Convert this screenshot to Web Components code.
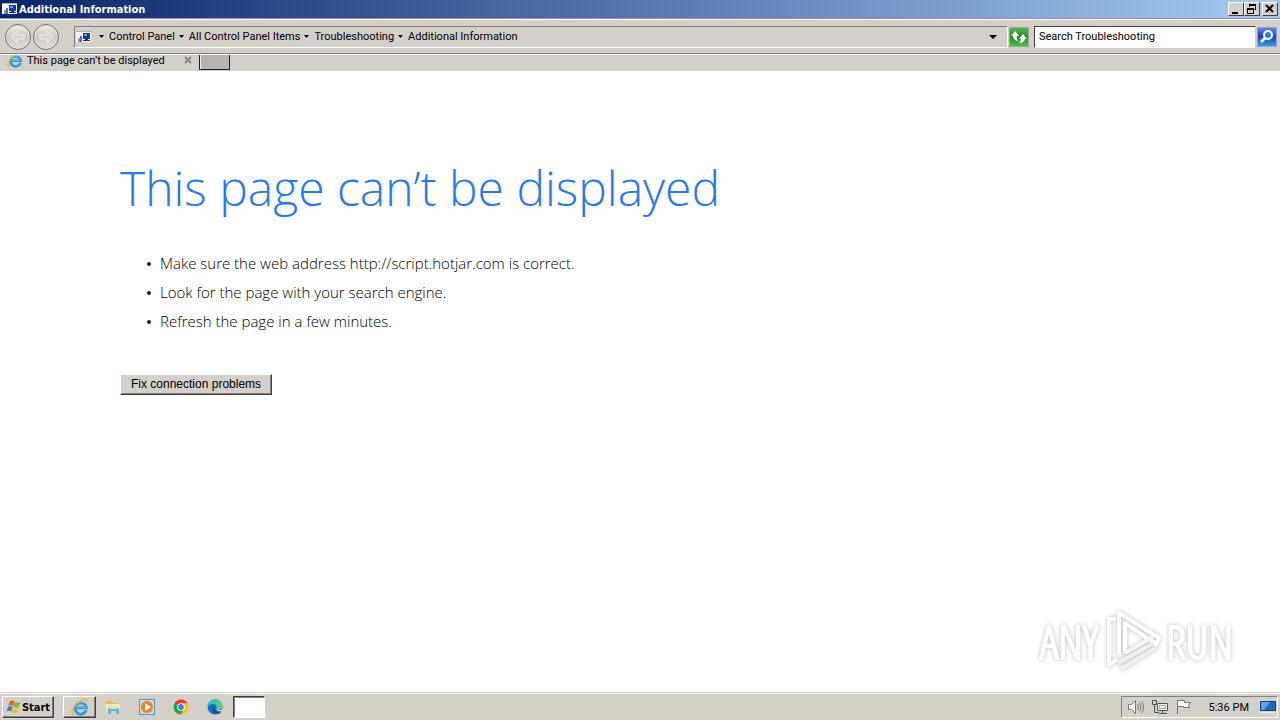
<!DOCTYPE html>
<html lang="en">
<head>
<meta charset="UTF-8">
<meta name="viewport" content="width=device-width, initial-scale=1">
<title>Additional Information</title>
<style>
  html, body {
    height: 100%;
    margin: 0;
  }
  body {
    display: flex;
    flex-direction: column;
    background: #fff;
    color: #000;
    overflow: hidden;
    font-family: Roboto, "DejaVu Sans", sans-serif;
    font-size: 11px;
    --face: #d4cfc8;
    --light: #fff;
    --shadow: #808080;
    --dark: #404040;
  }
</style>
</head>
<body>
<window-title>Additional Information</window-title>
<explorer-bar search="Search Troubleshooting">
  <path-crumb>Control Panel</path-crumb>
  <path-crumb>All Control Panel Items</path-crumb>
  <path-crumb>Troubleshooting</path-crumb>
  <path-crumb>Additional Information</path-crumb>
</explorer-bar>
<tab-strip>This page can’t be displayed</tab-strip>
<error-page heading="This page can’t be displayed" action="Fix connection problems">
  <error-hint>Make sure the web address http://script.hotjar.com is correct.</error-hint>
  <error-hint>Look for the page with your search engine.</error-hint>
  <error-hint>Refresh the page in a few minutes.</error-hint>
  <anyrun-mark slot="mark"></anyrun-mark>
</error-page>
<task-bar time="5:36 PM"></task-bar>

<script>
const ieIcon = size => `
  <svg width="${size}" height="${size}" viewBox="0 0 16 16" aria-hidden="true">
    <path d="M13.4 10.8A5 5 0 1 1 13.6 8.7H4.6" fill="none" stroke="#2a9be0" stroke-width="2.6"/>
    <path d="M4.5 8.2h8.5" stroke="#61c8f5" stroke-width="1"/>
    <path d="M5 5.5a5 5 0 0 1 6-1.5" fill="none" stroke="#7fd3f8" stroke-width="1"/>
    <path d="M2.8 14.6C-.8 14.4 1 8.5 5.6 4.6S14.8-.5 14.8 3.8" fill="none" stroke="#e9b92c" stroke-width="1.4"/>
  </svg>`;

const panelIcon = `
  <svg width="16" height="14" viewBox="0 0 16 14" aria-hidden="true">
    <path fill="#f4f4f4" d="M0 1h15v11H0z"/>
    <path fill="#9fb0c8" d="M0 1h15v1H0z"/>
    <path fill="#1838a8" d="M7 3h7v6H7z"/>
    <path fill="#6d9cf0" d="M8 4h3v2H8z"/>
    <path fill="#1b2c70" d="M9 9h3v1h2v1H7v-1h2z"/>
    <path fill="#8a9a8c" d="M2 8h2v4H2z"/>
    <path fill="#4472c4" d="M4 6h2v6H4z"/>
  </svg>`;

class WindowTitle extends HTMLElement {
  constructor() {
    super();
    this.attachShadow({ mode: 'open' });
  }

  connectedCallback() {
    this.shadowRoot.innerHTML = `
      <style>
        :host {
          display: flex;
          align-items: center;
          flex: none;
          height: 18px;
          padding: 0 2px;
          background: linear-gradient(90deg, #0a246a, #a6caf0);
          border-bottom: 1px solid #8c8cb4;
          color: #fff;
          font-family: "DejaVu Sans Condensed", "DejaVu Sans", sans-serif;
          font-weight: bold;
        }
        .name { flex: 1; padding-left: 1px; }
        button {
          width: 16px;
          height: 14px;
          padding: 0;
          border: 1px solid;
          border-color: var(--light) var(--dark) var(--dark) var(--light);
          background: var(--face);
        }
        .close { margin-left: 2px; }
        svg { display: block; }
      </style>
      ${panelIcon}
      <span class="name"><slot></slot></span>
      <button aria-label="Minimize"><svg width="14" height="12"><path d="M3 9h6v2H3z"/></svg></button>
      <button aria-label="Restore"><svg width="14" height="12"><path d="M4 1h7v6H9V6h1V3H5v1H4zM2 5h7v6H2zm1 2v3h5V7z" fill-rule="evenodd"/></svg></button>
      <button class="close" aria-label="Close"><svg width="14" height="12"><path d="M3 2l7 7M10 2L3 9" stroke="#000" stroke-width="2"/></svg></button>
    `;
  }
}

class PathCrumb extends HTMLElement {
  constructor() {
    super();
    this.attachShadow({ mode: 'open' });
  }

  connectedCallback() {
    this.shadowRoot.innerHTML = `
      <style>
        :host { display: flex; align-items: center; }
        button {
          padding: 0;
          border: 0;
          background: none;
          color: inherit;
          font: inherit;
          white-space: nowrap;
        }
        svg { display: block; margin: 0 5px 0 4px; }
      </style>
      <svg width="5" height="3" aria-hidden="true"><path d="M0 0h5L2.5 3z"/></svg>
      <button><slot></slot></button>
    `;
  }
}

class ExplorerBar extends HTMLElement {
  constructor() {
    super();
    this.attachShadow({ mode: 'open' });
  }

  connectedCallback() {
    this.shadowRoot.innerHTML = `
      <style>
        :host {
          display: flex;
          align-items: center;
          flex: none;
          height: 33px;
          padding: 0 3px 0 5px;
          background: var(--face);
          border-top: 1px solid var(--light);
          border-bottom: 1px solid var(--shadow);
        }
        button { padding: 0; border: 0; background: none; }
        svg { display: block; }
        .travel { display: flex; gap: 2px; margin-right: 15px; }
        .travel button {
          width: 26px;
          height: 26px;
          border: 1px solid #77736f;
          border-radius: 50%;
          background: linear-gradient(#f0eeec, #cbc7c2 50%, #e2dfdb);
          box-shadow: inset 0 0 0 1px #e6e3e0;
        }
        .address {
          display: flex;
          align-items: center;
          flex: 1;
          box-sizing: border-box;
          height: 22px;
          padding: 0 10px 0 1px;
          border: 1px solid;
          border-color: var(--shadow) var(--light) var(--light) var(--shadow);
        }
        .icon { margin-right: 3px; }
        .crumbs { display: flex; flex: 1; }
        .refresh, .go { width: 20px; height: 20px; border: 1px solid #8fb08f; }
        .refresh { background: linear-gradient(#56b556, #1d8c25 50%, #4fc04f); margin: 0 5px 0 1px; }
        .go { background: linear-gradient(#5a86e0, #1b3fb8 50%, #35a0e8); border-color: #90a4d8; margin-left: 1px; }
        input {
          box-sizing: border-box;
          width: 222px;
          height: 22px;
          padding: 0 4px;
          border: 1px solid;
          border-color: var(--dark) var(--face) var(--light) var(--dark);
          border-radius: 0;
          background: #fff;
          color: inherit;
          font: inherit;
          outline: 0;
        }
      </style>
      <nav class="travel">
        <button aria-label="Back"><svg width="24" height="24"><path d="M5 12l6-6v4h7v4h-7v4z" fill="#d8d5d1" stroke="#eeecea"/></svg></button>
        <button aria-label="Forward"><svg width="24" height="24"><path d="M19 12l-6-6v4H6v4h7v4z" fill="#d8d5d1" stroke="#eeecea"/></svg></button>
      </nav>
      <div class="address">
        <span class="icon">${panelIcon}</span>
        <div class="crumbs"><slot></slot></div>
        <button aria-label="Previous locations"><svg width="8" height="4"><path d="M0 0h8L4 4z"/></svg></button>
      </div>
      <button class="refresh" aria-label="Refresh"><svg width="18" height="18"><path d="M5 3L1 8h2q0 4 5 5-2-3-1-5h2zM13 6L9 11h2q0 2-2 4 5 0 6-4h2z" fill="#fff"/></svg></button>
      <input type="text" aria-label="Search" value="${this.getAttribute('search')}">
      <button class="go" aria-label="Go"><svg width="18" height="18"><circle cx="10" cy="7" r="4" fill="#3c74d8" stroke="#fff" stroke-width="2"/><path d="M7 10l-4 4" stroke="#fff" stroke-width="3"/></svg></button>
    `;
  }
}

class TabStrip extends HTMLElement {
  constructor() {
    super();
    this.attachShadow({ mode: 'open' });
  }

  connectedCallback() {
    this.shadowRoot.innerHTML = `
      <style>
        :host {
          display: flex;
          align-items: flex-end;
          flex: none;
          height: 16px;
          overflow: hidden;
          background: var(--face);
          border-top: 1px solid var(--light);
        }
        .tab {
          display: flex;
          align-items: center;
          box-sizing: border-box;
          width: 199px;
          height: 22px;
          padding: 0 7px;
        }
        .label { flex: 1; padding-left: 4px; white-space: nowrap; }
        button { padding: 0; border: 0; background: none; }
        svg { display: block; }
        .new {
          align-self: flex-start;
          box-sizing: border-box;
          width: 31px;
          height: 15px;
          border: 1px solid #202020;
          border-top: 0;
          background: #b9b3ae;
          box-shadow: inset 1px 0 #eee;
        }
      </style>
      <div class="tab">
        ${ieIcon(16)}
        <span class="label"><slot></slot></span>
        <button aria-label="Close tab"><svg width="8" height="8"><path d="M1 1l6 6M7 1L1 7" stroke="#8c8884" stroke-width="2"/></svg></button>
      </div>
      <button class="new" aria-label="New tab"></button>
    `;
  }
}

class ErrorHint extends HTMLElement {
  constructor() {
    super();
    this.attachShadow({ mode: 'open' });
  }

  connectedCallback() {
    this.setAttribute('role', 'listitem');
    this.shadowRoot.innerHTML = `
      <style>
        :host { display: flex; align-items: center; line-height: 29px; }
        i {
          width: 4px;
          height: 4px;
          margin-right: 9px;
          border-radius: 50%;
          background: #222;
        }
      </style>
      <i></i><span><slot></slot></span>
    `;
  }
}

class ErrorPage extends HTMLElement {
  constructor() {
    super();
    this.attachShadow({ mode: 'open' });
  }

  connectedCallback() {
    this.shadowRoot.innerHTML = `
      <style>
        :host {
          display: block;
          flex: 1;
          position: relative;
          padding: 82px 120px 0;
          background: #fff;
          font-family: "Open Sans", sans-serif;
          font-weight: 300;
          font-size: 15px;
        }
        h1 {
          margin: 0;
          color: #2778ec;
          font-size: 48px;
          font-weight: 300;
          line-height: 70px;
        }
        .hints { padding: 26px 0 38px 27px; }
        button {
          height: 21px;
          padding: 0 10px 2px;
          border: 1px solid;
          border-color: var(--light) var(--dark) var(--dark) var(--light);
          box-shadow: inset -1px -1px var(--shadow);
          background: var(--face);
          color: #000;
          font: 12px "Liberation Sans", sans-serif;
          display: block;
        }
        ::slotted([slot="mark"]) {
          position: absolute;
          right: 47px;
          bottom: 20px;
        }
      </style>
      <h1>${this.getAttribute('heading')}</h1>
      <div class="hints" role="list"><slot></slot></div>
      <button>${this.getAttribute('action')}</button>
      <slot name="mark"></slot>
    `;
  }
}

class AnyrunMark extends HTMLElement {
  constructor() {
    super();
    this.attachShadow({ mode: 'open' });
  }

  connectedCallback() {
    this.shadowRoot.innerHTML = `
      <style>
        :host {
          display: flex;
          align-items: center;
          gap: 4px;
          color: #fff;
          font: 300 46px/64px "Open Sans Condensed Light", "Open Sans Condensed", "Liberation Sans Narrow", sans-serif;
          filter: drop-shadow(0 0 2px #bcbcbc);
        }
        span {
          -webkit-text-stroke: 2px #fff;
        }
        svg { display: block; }
      </style>
      <span>ANY</span>
      <svg width="60" height="64" viewBox="0 0 60 64" fill="none" stroke="#fff" stroke-width="4" stroke-linejoin="round" aria-hidden="true">
        <path d="M17 46V4l40 25-3 6-31-21v30"/>
        <path d="M14 10H7v46l8-6"/>
        <path d="M23 44l28-16" stroke="#f6f6f6"/>
        <path d="M16 54l36-20M19 60l36-22" stroke="#f0f0f0"/>
      </svg>
      <span>RUN</span>
    `;
  }
}

class TaskBar extends HTMLElement {
  constructor() {
    super();
    this.attachShadow({ mode: 'open' });
  }

  connectedCallback() {
    this.shadowRoot.innerHTML = `
      <style>
        :host {
          display: flex;
          align-items: center;
          flex: none;
          position: relative;
          box-sizing: border-box;
          height: 27px;
          padding: 2px;
          background: var(--face);
          border-top: 1px solid var(--light);
          box-shadow: 0 -1px var(--face);
        }
        button {
          display: flex;
          align-items: center;
          justify-content: center;
          box-sizing: border-box;
          width: 34px;
          height: 22px;
          padding: 0;
          border: 1px solid transparent;
          background: none;
          color: inherit;
          font: inherit;
        }
        svg { display: block; }
        .start, .raised {
          border-color: var(--light) var(--dark) var(--dark) var(--light);
          box-shadow: inset -1px -1px var(--shadow);
        }
        .start {
          width: 52px;
          margin-right: 9px;
          font-family: "DejaVu Sans Condensed", "DejaVu Sans", sans-serif;
          font-weight: bold;
        }
        .raised { width: 33px; }
        .blank {
          width: 32px;
          margin-left: 1px;
          border: 1px solid;
          border-color: var(--dark) var(--light) var(--light) var(--dark);
          box-shadow: inset 1px 1px var(--shadow);
          background: #fff;
        }
        .tray {
          display: flex;
          align-items: center;
          box-sizing: border-box;
          height: 22px;
          margin-left: auto;
          padding: 0 1px 0 6px;
          gap: 8px;
          border: 1px solid;
          border-color: var(--shadow) var(--light) var(--light) var(--shadow);
        }
        time { margin: 0 3px 0 9px; }
      </style>
      <button class="start"><svg width="16" height="16" viewBox="0 0 17 16" aria-hidden="true">
        <path fill="#e8552c" d="M4 2q3-2 5 0L7.5 7q-2-2-5 0z"/>
        <path fill="#7db83a" d="M9.5 2.5q3 2 6 0L14 7.5q-3 2-6 0z"/>
        <path fill="#3f80d0" d="M2 8q3-2 5 0l-1.5 5q-2-2-5 0z"/>
        <path fill="#f5bc2a" d="M7.5 8.5q3 2 6 0L12 13.5q-3 2-6 0z"/>
      </svg>Start</button>
      <button class="raised" aria-label="Internet Explorer">${ieIcon(18)}</button>
      <button aria-label="File Explorer"><svg width="16" height="16">
        <path fill="#e3bd58" d="M1 2h6l1 2h6v8H1z"/>
        <path fill="#f9e9a4" d="M1 5h14v7H1z"/>
        <path fill="#63b4d8" d="M3 9h11v6h-3v-3H6v3H3z"/>
        <path fill="#bfe4f0" d="M4 8h9v2H4z"/>
      </svg></button>
      <button aria-label="Media Player"><svg width="16" height="16">
        <path fill="#c5dcef" stroke="#5794c8" d="M.5.5h15v15H.5z"/>
        <circle cx="8" cy="8" r="6" fill="#ef8218"/>
        <path fill="#fff" d="M6 4l6 4-6 4z"/>
      </svg></button>
      <button aria-label="Chrome"><svg width="16" height="16">
        <circle cx="8" cy="8" r="7.5" fill="#f8c51c"/>
        <path fill="#e33b2e" d="M8 8L1.5 4.3A7.5 7.5 0 0 1 14.5 4.3H8z"/>
        <path fill="#30a04c" d="M1.5 4.3A7.5 7.5 0 0 0 8 15.5L11 10 8 8z"/>
        <circle cx="8" cy="8" r="3.8" fill="#fff"/>
        <circle cx="8" cy="8" r="2.9" fill="#3d7de8"/>
      </svg></button>
      <button aria-label="Edge"><svg width="16" height="16">
        <circle cx="8" cy="8" r="7.5" fill="#1673c4"/>
        <path fill="#38bfc0" d="M.5 8A7.5 7.5 0 0 1 15.5 7q0 3.5-4 3.5-2 0-1.5-1.5Q9 5 6 5 2 5 .5 8z"/>
        <path fill="#5fd06c" d="M9 .6A7.5 7.5 0 0 1 15.5 7q0 3.5-4 3.5-1.5 0-1.5-1 2-4-1-9z"/>
        <path fill="#d4cfc8" d="M9 8q0 5 6 4l1-1v-1q-3 1.5-5 .5T9 8z"/>
        <path fill="#124f9c" d="M5 9q0 5 5 6 3 0 4.5-2.5Q8 15 7 8 5 7 5 9z"/>
      </svg></button>
      <button class="blank" aria-label="Additional Information"></button>
      <div class="tray">
        <svg width="16" height="16" fill="none" stroke="#777" aria-label="Volume">
          <path fill="#fff" d="M.5 5.5h3l4-4v13l-4-4h-3z"/><path d="M9.5 5q2 3 0 6M11.5 3.5q3 4.5 0 9M13.5 2q4 6 0 12"/>
        </svg>
        <svg width="16" height="16" fill="none" stroke="#555" aria-label="Network">
          <path fill="#eee" d="M5.5 4.5h10v7h-10z"/><path stroke="#aaa" d="M7.5 6.5h6v3h-6z"/><path d="M7 14.5h8M10.5 12v2M.5 1.5v4h4v-4zM2.5 5.5v8H7"/>
        </svg>
        <svg width="16" height="16" fill="none" stroke="#777" aria-label="Action Center">
          <path fill="#fff" d="M1.5 1.5h7v2h6l-2 3 1 2h-6v-1h-6z"/><path d="M1.5 1v14"/>
        </svg>
        <time>${this.getAttribute('time')}</time>
        <svg width="16" height="14" aria-label="Show desktop">
          <path fill="#2366bd" stroke="#173f7c" d="M.5 1.5h15v9H.5z"/><path fill="#5da0e4" d="M1 2h9L4 10H1z"/><path fill="#e9eef4" d="M1 12h14v1H1z"/>
        </svg>
      </div>
    `;
  }
}

customElements.define('window-title', WindowTitle);
customElements.define('path-crumb', PathCrumb);
customElements.define('explorer-bar', ExplorerBar);
customElements.define('tab-strip', TabStrip);
customElements.define('error-hint', ErrorHint);
customElements.define('error-page', ErrorPage);
customElements.define('anyrun-mark', AnyrunMark);
customElements.define('task-bar', TaskBar);
</script>
</body>
</html>
